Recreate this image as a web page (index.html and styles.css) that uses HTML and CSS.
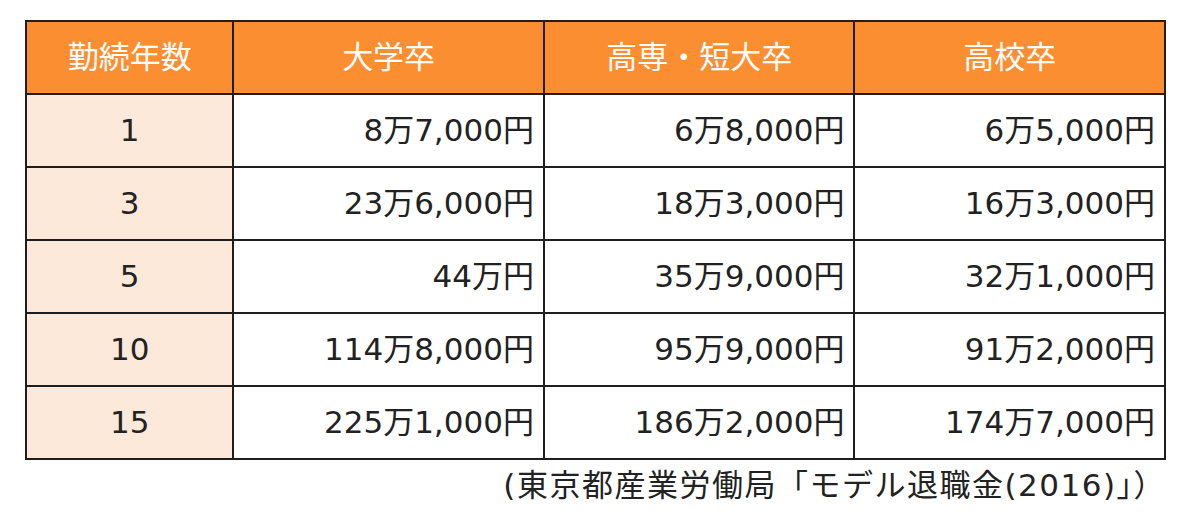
FILE: index.html
```html
<!DOCTYPE html>
<html lang="ja">
<head>
<meta charset="utf-8">
<link rel="stylesheet" href="styles.css">
</head>
<body>
<div class="wrap">
<table class="tbl">
  <thead>
    <tr><th class="c1">勤続年数</th><th>大学卒</th><th>高専・短大卒</th><th>高校卒</th></tr>
  </thead>
  <tbody>
    <tr><td class="yr">1</td><td>8万7,000円</td><td>6万8,000円</td><td>6万5,000円</td></tr>
    <tr><td class="yr">3</td><td>23万6,000円</td><td>18万3,000円</td><td>16万3,000円</td></tr>
    <tr><td class="yr">5</td><td>44万円</td><td>35万9,000円</td><td>32万1,000円</td></tr>
    <tr><td class="yr">10</td><td>114万8,000円</td><td>95万9,000円</td><td>91万2,000円</td></tr>
    <tr><td class="yr">15</td><td>225万1,000円</td><td>186万2,000円</td><td>174万7,000円</td></tr>
  </tbody>
</table>
<p class="src">(東京都産業労働局「モデル退職金(2016)」）</p>
</div>
</body>
</html>
```
FILE: styles.css
```css
html, body {
  margin: 0;
  padding: 0;
  background: #fff;
}
.wrap {
  padding: 20px 0 0 25px;
  width: 1141px;
}
.tbl {
  border-collapse: collapse;
  width: 1141px;
  table-layout: fixed;
  font-family: "DejaVu Sans", "Noto Sans CJK JP", sans-serif;
  font-size: 31px;
  color: #222;
}
.tbl th, .tbl td {
  border: 2px solid #1e1e1e;
  height: 73px;
  padding: 0 9px;
  box-sizing: border-box;
  line-height: 1;
}
.tbl th {
  background: #fb8e31;
  color: #fff;
  font-weight: normal;
  text-align: center;
  width: 310px;
}
.tbl th.c1 {
  width: 207px;
}
.tbl td {
  text-align: right;
  background: #fff;
}
.tbl td.yr {
  text-align: center;
  background: #fde9da;
}
.src {
  margin: 8px 0 0;
  text-align: right;
  padding-right: 0;
  font-family: "DejaVu Sans", "Noto Sans CJK JP", sans-serif;
  font-size: 31px;
  letter-spacing: 1.5px;
  line-height: 1.1;
  color: #222;
}
```
